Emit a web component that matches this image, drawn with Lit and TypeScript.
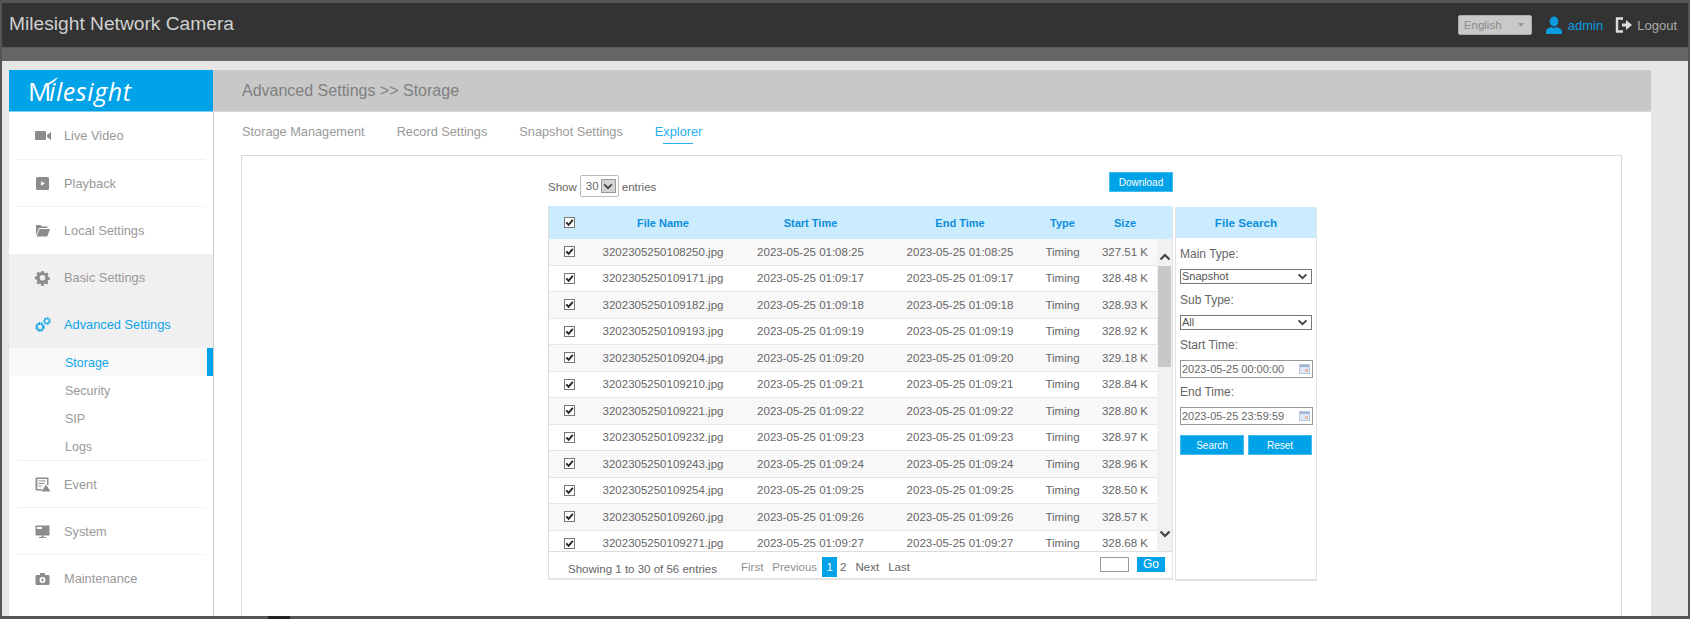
import { LitElement, html, css, svg } from "lit";
import { customElement } from "lit/decorators.js";

const ROWS = [
  ["3202305250108250", "01:08:25", "327.51"],
  ["3202305250109171", "01:09:17", "328.48"],
  ["3202305250109182", "01:09:18", "328.93"],
  ["3202305250109193", "01:09:19", "328.92"],
  ["3202305250109204", "01:09:20", "329.18"],
  ["3202305250109210", "01:09:21", "328.84"],
  ["3202305250109221", "01:09:22", "328.80"],
  ["3202305250109232", "01:09:23", "328.97"],
  ["3202305250109243", "01:09:24", "328.96"],
  ["3202305250109254", "01:09:25", "328.50"],
  ["3202305250109260", "01:09:26", "328.57"],
  ["3202305250109271", "01:09:27", "328.68"],
];

const ICONS: Record<string, unknown> = {
  video: svg`<rect x="1" y="4" width="11" height="9" rx="1"/><path d="M13 8l4-3v8l-4-3z"/>`,
  play: svg`<rect x="2" y="2" width="13" height="13" rx="1.5"/><path d="M7 6.2l4 2.3-4 2.3z" fill="#fff"/>`,
  folder: svg`<path d="M2 3h4.5l1.5 1.5h5.5V6H5L2.5 12.5H2z"/><path d="M5.5 7H16l-2.8 7.5H2.6z"/>`,
  gear: svg`<path fill-rule="evenodd" d="M7.3 2h2.4l.3 1.8 1.3.6 1.6-1 1.7 1.7-1 1.5.5 1.4 1.8.3v2.4l-1.8.3-.6 1.3 1 1.6-1.7 1.7-1.5-1-1.4.5-.3 1.8H7.3l-.3-1.8-1.3-.6-1.6 1-1.7-1.7 1-1.5-.5-1.4L1 10V7.6l1.8-.3.6-1.3-1-1.6 1.7-1.7 1.5 1 1.4-.5zM8.5 6a2.8 2.8 0 100 5.6 2.8 2.8 0 000-5.6z"/>`,
  gears: svg`<g fill="none" stroke="#1ba6e8"><circle cx="6" cy="11" r="3.4" stroke-width="2.6" stroke-dasharray="2.2 .5"/><circle cx="13" cy="5" r="2.6" stroke-width="2.2" stroke-dasharray="1.8 .5"/></g>`,
  event: svg`<path fill-rule="evenodd" d="M2.500 1.500h11a1 1 0 011 1V9h-1.400V3H3.400v10H8v1.500H2.500a1 1 0 01-1-1v-11a1 1 0 011-1z"/><path d="M4.500 4.500h7v1h-7zM4.500 7h6v1h-6zM4.500 9.500h3v1h-3z"/><path d="M12 8.500l4.500 7h-9z"/>`,
  monitor: svg`<path fill-rule="evenodd" d="M1.500 2.500h14v10h-14zM3 4v2h5V4z"/><path d="M7.500 12.500h2V14H12v1H5v-1h2.500z"/>`,
  case: svg`<path fill-rule="evenodd" d="M6 3h5v2h3.500A1 1 0 0115.500 6v8a1 1 0 01-1 1h-12a1 1 0 01-1-1V6a1 1 0 011-1H6zM8.500 7a3 3 0 100 6 3 3 0 000-6z"/><path d="M8 8.500h1V9.500h1v1H9v1H8v-1H7v-1h1z"/>`,
};

const NAV_TOP = [
  ["video", "Live Video"],
  ["play", "Playback"],
];
const NAV_BOTTOM = [
  ["event", "Event"],
  ["monitor", "System"],
];

const check = html`<svg class="chk" viewBox="0 0 11 11" width="11" height="11">
  <rect x=".5" y=".5" width="10" height="10" fill="#fff" stroke="#777" />
  <path d="M2.300 5.300l2.300 2.500 4.200-5" fill="none" stroke="#222" stroke-width="1.800" />
</svg>`;

const calendar = html`<svg class="cal" viewBox="0 0 11 10" width="11" height="10">
  <rect x=".5" y=".5" width="10" height="9" fill="#dfe8f6" stroke="#b8c6dc" />
  <rect x="1" y="1" width="9" height="2" fill="#9fb4d6" />
  <rect x="6" y="5" width="3" height="3" fill="#e9b9a6" />
</svg>`;

const chevron = (up: boolean) => html`<svg class="chev" viewBox="0 0 12 8" width="12" height="8">
  <path d="${up ? "M1.500 6.500L6 2l4.500 4.500" : "M1.500 1.500L6 6l4.500-4.500"}" fill="none" stroke="#444" stroke-width="2.200" />
</svg>`;

@customElement("app-root")
export class AppRoot extends LitElement {
  static styles = css`
    :host {
      display: block;
      width: 1690px;
      height: 619px;
      overflow: hidden;
      font-family: "Liberation Sans", Arial, sans-serif;
      background: #555;
    }
    .frame {
      box-sizing: border-box;
      height: 619px;
      display: flex;
      flex-direction: column;
      padding: 3px 2px 3px 2px;
      position: relative;
    }
    .top {
      height: 44px;
      background: #333;
      display: flex;
      align-items: center;
      color: #ccc;
      flex: none;
    }
    .brand {
      font-size: 19.200px;
      margin-left: 7px;
      margin-top: -3px;
      color: #d0d0d0;
    }
    .top-right {
      margin-left: auto;
      display: flex;
      align-items: center;
      margin-right: 11px;
    }
    .lang {
      box-sizing: border-box;
      width: 74px;
      height: 20px;
      background: #c9c9c9;
      border: 1px solid #aaa;
      border-radius: 2px;
      font-size: 11.500px;
      color: #8a8a8a;
      display: flex;
      align-items: center;
      justify-content: space-between;
      padding: 0 7px 0 5px;
    }
    .tri {
      width: 0;
      height: 0;
      border-left: 3px solid transparent;
      border-right: 3px solid transparent;
      border-top: 4px solid #999;
    }
    .user {
      margin-left: 13px;
    }
    .admin {
      margin-left: 5px;
      color: #0b9be0;
      font-size: 13px;
    }
    .logout-i {
      margin-left: 12px;
    }
    .logout {
      margin-left: 4px;
      color: #aaa;
      font-size: 13px;
    }
    .band {
      height: 14px;
      background: #666;
      border-top: 1px solid #5a5a5a;
      box-sizing: border-box;
      flex: none;
    }
    .body {
      flex: 1;
      min-height: 0;
      background: #e6e6e6;
      padding: 9px 37px 0 7px;
      display: flex;
      overflow: hidden;
    }
    .side {
      width: 204px;
      flex: none;
      background: #fff;
      border-right: 1px solid #ccc;
    }
    .logo {
      height: 42px;
      background: #00a2e8;
      display: flex;
      align-items: center;
      padding-left: 19px;
      color: #fff;
      font-family: "Open Sans", sans-serif;
      font-style: italic;
      font-size: 25px;
      font-weight: 400;
      letter-spacing: 0.6px;
      border-bottom: 1px solid #7fd0f3;
      box-sizing: border-box;
      position: relative;
    }
    .logo b {
      font-weight: 400;
      font-size: 26px;
      font-style: normal;
      margin-right: -3px;
    }
    .swoosh {
      position: absolute;
      left: 33px;
      top: 7px;
    }
    .item {
      box-sizing: border-box;
      height: 47px;
      margin: 0 8px;
      padding-left: 17px;
      display: flex;
      align-items: center;
      gap: 13px;
      font-size: 12.800px;
      color: #999;
      border-bottom: 1px solid #f3f3f3;
    }
    .item.first {
      height: 48px;
    }
    .item.last {
      border-bottom: 0;
    }
    .item svg {
      fill: #8c8c8c;
      flex: none;
    }
    .band-item {
      background: #f0f0f0;
    }
    .band-item .item {
      border-bottom-color: #eaeaea;
    }
    .item.on {
      color: #0ea5ea;
      border-bottom: 0;
    }
    .sub {
      box-sizing: border-box;
      height: 28px;
      padding: 1px 0 0 56px;
      display: flex;
      align-items: center;
      font-size: 12.500px;
      color: #999;
    }
    .sub.on {
      color: #0ea5ea;
      background: #f9f9f9;
      border-right: 6px solid #00a2e8;
    }
    .rule {
      height: 1px;
      margin: 0 8px;
      background: #f3f3f3;
    }
    .main {
      flex: 1;
      min-width: 0;
      background: #fff;
      display: flex;
      flex-direction: column;
    }
    .crumb {
      flex: none;
      height: 42px;
      background: #c8c8c8;
      border-bottom: 1px solid #d9d9d9;
      box-sizing: border-box;
      padding-left: 28px;
      display: flex;
      align-items: center;
      color: #808080;
      font-size: 16px;
    }
    .tabs {
      flex: none;
      height: 43px;
      padding-left: 28px;
      display: flex;
      align-items: flex-start;
      gap: 32px;
      font-size: 12.750px;
      color: #999;
      box-sizing: border-box;
      padding-top: 12px;
    }
    .tab {
      position: relative;
      line-height: 15px;
    }
    .tab.on {
      color: #26aef0;
    }
    .tab.on::after {
      content: "";
      position: absolute;
      left: 8px;
      right: 9px;
      top: 19px;
      height: 1px;
      background: #26aef0;
    }
    .panel {
      flex: 1;
      margin: 0 29px 0 27px;
      border: 1px solid #d9d9d9;
      border-bottom: 0;
      padding: 16px 0 0 306px;
      display: grid;
      grid-template-columns: 625px 142px;
      column-gap: 2px;
      align-content: start;
    }
    .left {
      display: flex;
      flex-direction: column;
    }
    .tools {
      height: 34px;
      display: flex;
      align-items: flex-start;
      font-size: 11.500px;
      color: #666;
    }
    .show {
      margin-top: 4px;
      display: flex;
      align-items: center;
      gap: 3px;
    }
    .sel30 {
      box-sizing: border-box;
      width: 39px;
      height: 22px;
      border: 1px solid #bbb;
      border-radius: 2px;
      display: flex;
      align-items: center;
      padding-left: 5px;
      gap: 2px;
      margin-top: -1px;
    }
    .arrowbox {
      width: 15px;
      height: 14px;
      background: #d4d4d4;
      border: 1px solid #999;
      box-sizing: border-box;
      display: flex;
      align-items: center;
      justify-content: center;
    }
    .arrowbox svg {
      width: 10px;
      height: 7px;
    }
    .btn {
      background: #00a2e8;
      color: #fff;
      font-size: 10px;
      display: flex;
      align-items: center;
      justify-content: center;
      box-sizing: border-box;
      border: 1px solid #45bbee;
    }
    .dl {
      width: 64px;
      height: 20px;
      margin-left: auto;
    }
    .table {
      box-sizing: border-box;
      height: 374px;
      border: 1px solid #e3e3e3;
      border-top: 0;
      border-bottom-width: 2px;
      display: flex;
      flex-direction: column;
      border-left-color: #ddd;
    }
    .cols {
      display: grid;
      grid-template-columns: 41px 146px 149px 150px 55px 70px;
      align-items: center;
      justify-items: center;
    }
    .thead {
      flex: none;
      height: 33px;
      background: #cbebff;
      color: #0f8fdb;
      font-weight: bold;
      font-size: 11px;
      overflow: hidden;
    }
    .scrollarea {
      flex: none;
      height: 313px;
      display: flex;
      overflow: hidden;
      border-bottom: 1px solid #ddd;
      box-sizing: border-box;
    }
    .rows {
      flex: 1;
      min-width: 0;
      overflow: hidden;
    }
    .row {
      box-sizing: border-box;
      height: 26.500px;
      font-size: 11.500px;
      color: #666;
      background: #fff;
      border-bottom: 1px solid #e6e6e6;
    }
    .row.odd {
      background: #f8f8f8;
    }
    .chk {
      display: block;
    }
    .bar {
      flex: none;
      width: 15px;
      background: #f1f1f1;
      display: flex;
      flex-direction: column;
      align-items: center;
    }
    .chev {
      flex: none;
    }
    .bar .chev:first-child {
      margin-top: 14px;
    }
    .bar .chev:last-child {
      margin-top: 163px;
    }
    .thumb {
      flex: none;
      width: 13px;
      height: 101px;
      background: #c8c8c8;
      margin-top: 5px;
    }
    .foot {
      flex: 1;
      display: flex;
      align-items: center;
      font-size: 11.500px;
      color: #666;
      padding: 4px 0 0 19px;
    }
    .showing {
      width: 173px;
      margin-top: 4px;
    }
    .pager {
      display: flex;
      align-items: center;
      font-size: 11.500px;
      margin-top: -1px;
    }
    .pg {
      margin-right: 9px;
      color: #666;
    }
    .pg.dim {
      color: #8f8f8f;
    }
    .pg.cur {
      width: 15px;
      height: 20px;
      background: #00a2e8;
      color: #fff;
      display: flex;
      align-items: center;
      justify-content: center;
      margin-right: 3px;
      margin-left: -4px;
    }
    .jump {
      box-sizing: border-box;
      width: 29px;
      height: 15px;
      border: 1px solid #999;
      margin-left: auto;
      margin-right: 8px;
      margin-top: -6px;
    }
    .go {
      width: 28px;
      height: 15px;
      margin-right: 7px;
      margin-top: -6px;
      font-size: 12px;
      background: #00a2e8;
      color: #fff;
      display: flex;
      align-items: center;
      justify-content: center;
    }
    .search {
      box-sizing: border-box;
      margin-top: 35px;
      height: 374px;
      border: 1px solid #e3e3e3;
      border-top: 0;
      border-bottom-width: 2px;
      display: flex;
      flex-direction: column;
      font-size: 12px;
      color: #666;
    }
    .shead {
      flex: none;
      height: 31px;
      background: #cbebff;
      color: #0f8fdb;
      font-weight: bold;
      font-size: 11.700px;
      display: flex;
      align-items: center;
      justify-content: center;
    }
    .sbody {
      padding: 0 4px;
      display: flex;
      flex-direction: column;
    }
    .lbl {
      height: 16px;
      line-height: 16px;
      margin-top: 8px;
      margin-bottom: 7px;
    }
    .lbl.a {
      margin-top: 7px;
    }
    .lbl.b {
      margin-top: 6px;
    }
    .sel {
      box-sizing: border-box;
      width: 132px;
      height: 15px;
      border: 1px solid #777;
      background: #fff;
      padding: 0 1px;
      font-size: 11px;
      line-height: 13px;
      color: #555;
      font-family: inherit;
      display: flex;
      align-items: center;
      justify-content: space-between;
    }
    .sel svg {
      width: 11px;
      height: 7px;
      margin-right: 2px;
    }
    .date {
      box-sizing: border-box;
      width: 133px;
      height: 18px;
      border: 1px solid #999;
      display: flex;
      align-items: center;
      justify-content: space-between;
      padding: 0 2px 0 1px;
      font-size: 11px;
      color: #666;
    }
    .acts {
      display: flex;
      gap: 4px;
      margin-top: 10px;
    }
    .acts .btn {
      width: 64px;
      height: 20px;
    }
    .shade {
      position: absolute;
      left: 268px;
      bottom: 0;
      width: 22px;
      height: 3px;
      background: #222;
    }
  `;

  private icon(name: string) {
    return html`<svg viewBox="0 0 17 17" width="17" height="17">${ICONS[name]}</svg>`;
  }

  render() {
    return html`
      <div class="frame">
        <div class="top">
          <div class="brand">Milesight Network Camera</div>
          <div class="top-right">
            <div class="lang"><span>English</span><span class="tri"></span></div>
            <svg class="user" viewBox="0 0 18 18" width="18" height="18" fill="#0b9be0">
              <ellipse cx="9" cy="5.500" rx="4.300" ry="5" />
              <path d="M1 18v-2.500c0-2.500 3-3.500 5-4.500 1.500 1 4.500 1 6 0 2 1 5 2 5 4.500V18z" />
            </svg>
            <span class="admin">admin</span>
            <svg class="logout-i" viewBox="0 0 18 18" width="18" height="18">
              <path d="M8 2.500H2v13h6" fill="none" stroke="#ddd" stroke-width="2.400" />
              <path d="M7 7.500h4V4l6 5-6 5v-3.500H7z" fill="#ddd" />
            </svg>
            <span class="logout">Logout</span>
          </div>
        </div>
        <div class="band"></div>
        <div class="body">
          <div class="side">
            <div class="logo">
              <b>M</b><span>ilesight</span>
              <svg class="swoosh" viewBox="0 0 16 10" width="16" height="10">
                <path d="M0 9.500C5 7 10 4 16 0c-2 4-7 8-16 9.500z" fill="#fff" />
              </svg>
            </div>
            ${NAV_TOP.map(
              ([i, t], n) => html`<div class="item ${n === 0 ? "first" : ""}">${this.icon(i)}<span>${t}</span></div>`
            )}
            <div class="item last">${this.icon("folder")}<span>Local Settings</span></div>
            <div class="band-item">
              <div class="item">${this.icon("gear")}<span>Basic Settings</span></div>
              <div class="item on">${this.icon("gears")}<span>Advanced Settings</span></div>
            </div>
            <div class="sub on">Storage</div>
            <div class="sub">Security</div>
            <div class="sub">SIP</div>
            <div class="sub">Logs</div>
            <div class="rule"></div>
            ${NAV_BOTTOM.map(
              ([i, t]) => html`<div class="item">${this.icon(i)}<span>${t}</span></div>`
            )}
            <div class="item last">${this.icon("case")}<span>Maintenance</span></div>
          </div>
          <div class="main">
            <div class="crumb">Advanced Settings &gt;&gt; Storage</div>
            <div class="tabs">
              <span class="tab">Storage Management</span>
              <span class="tab">Record Settings</span>
              <span class="tab">Snapshot Settings</span>
              <span class="tab on">Explorer</span>
            </div>
            <div class="panel">
              <div class="left">
                <div class="tools">
                  <div class="show">
                    <span>Show</span>
                    <span class="sel30"><span>30</span>
                      <span class="arrowbox">${chevron(false)}</span></span>
                    <span>entries</span>
                  </div>
                  <div class="btn dl">Download</div>
                </div>
                <div class="table">
                  <div class="cols thead">
                    ${check}<span>File Name</span><span>Start Time</span><span>End Time</span><span>Type</span><span>Size</span>
                  </div>
                  <div class="scrollarea">
                    <div class="rows">
                      ${ROWS.map(
                        (r, i) => html`<div class="cols row ${i % 2 ? "" : "odd"}">
                          ${check}
                          <span>${r[0]}.jpg</span>
                          <span>2023-05-25 ${r[1]}</span>
                          <span>2023-05-25 ${r[1]}</span>
                          <span>Timing</span>
                          <span>${r[2]} K</span>
                        </div>`
                      )}
                    </div>
                    <div class="bar">
                      ${chevron(true)}
                      <div class="thumb"></div>
                      ${chevron(false)}
                    </div>
                  </div>
                  <div class="foot">
                    <span class="showing">Showing 1 to 30 of 56 entries</span>
                    <div class="pager">
                      <span class="pg dim">First</span>
                      <span class="pg dim">Previous</span>
                      <span class="pg cur">1</span>
                      <span class="pg">2</span>
                      <span class="pg">Next</span>
                      <span class="pg">Last</span>
                    </div>
                    <span class="jump"></span>
                    <span class="go">Go</span>
                  </div>
                </div>
              </div>
              <div class="search">
                <div class="shead">File Search</div>
                <div class="sbody">
                  <div class="lbl">Main Type:</div>
                  <div class="sel"><span>Snapshot</span>${chevron(false)}</div>
                  <div class="lbl">Sub Type:</div>
                  <div class="sel"><span>All</span>${chevron(false)}</div>
                  <div class="lbl a">Start Time:</div>
                  <div class="date"><span>2023-05-25 00:00:00</span>${calendar}</div>
                  <div class="lbl b">End Time:</div>
                  <div class="date"><span>2023-05-25 23:59:59</span>${calendar}</div>
                  <div class="acts">
                    <div class="btn">Search</div>
                    <div class="btn">Reset</div>
                  </div>
                </div>
              </div>
            </div>
          </div>
        </div>
        <div class="shade"></div>
      </div>
    `;
  }
}
